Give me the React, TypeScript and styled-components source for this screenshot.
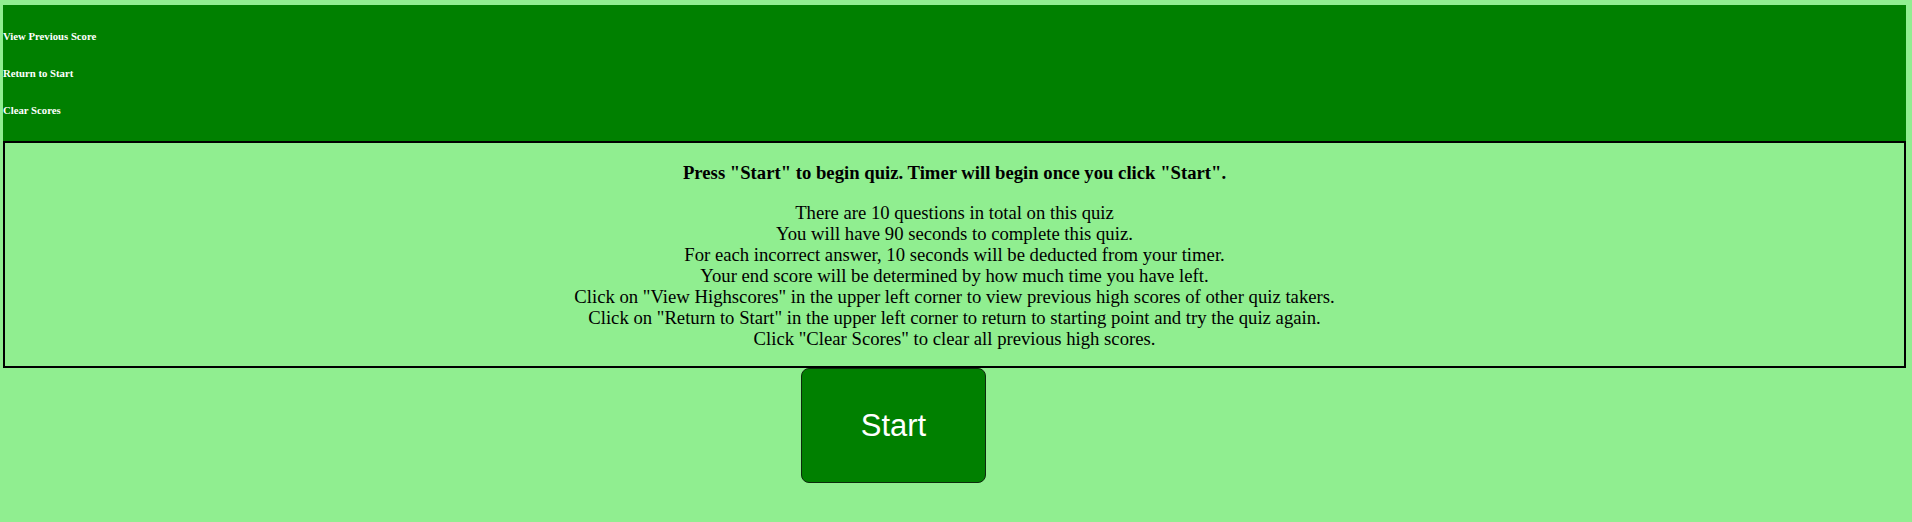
import React from "react";
import styled, { createGlobalStyle } from "styled-components";

const GlobalStyle = createGlobalStyle`
    body {
        margin: 5px 6px 0 3px;
        background-color: #90ee90;
        font-family: "Liberation Serif", "Times New Roman", serif;
    }
`;

const Header = styled.header`
    background-color: #008000;
    display: flex;
    flex-direction: column;
    gap: 25px;
    padding: 25px 0;
`;

const NavLink = styled.a`
    display: block;
    color: white;
    font-size: 10.72px;
    font-weight: bold;
    line-height: 12px;
    text-decoration: none;
    cursor: pointer;
`;

const InfoBox = styled.section`
    border: 2px solid black;
    text-align: center;
    padding: 19px 0 17px;
`;

const Heading = styled.h4`
    margin: 0 0 19px;
    font-size: 18.7px;
    line-height: 21px;
    font-weight: bold;
`;

const Rules = styled.p`
    margin: 0;
    font-size: 18.7px;
    line-height: 21px;
`;

const StartButton = styled.button`
    display: block;
    margin-left: 798px;
    width: 185px;
    height: 115px;
    background-color: #008000;
    border: 1px solid #0d2a0d;
    border-radius: 8px;
    color: white;
    font-family: "Liberation Sans", Arial, sans-serif;
    font-size: 31px;
    cursor: pointer;
`;

const rules = [
    "There are 10 questions in total on this quiz",
    "You will have 90 seconds to complete this quiz.",
    "For each incorrect answer, 10 seconds will be deducted from your timer.",
    "Your end score will be determined by how much time you have left.",
    'Click on "View Highscores" in the upper left corner to view previous high scores of other quiz takers.',
    'Click on "Return to Start" in the upper left corner to return to starting point and try the quiz again.',
    'Click "Clear Scores" to clear all previous high scores.',
];

function App() {
    return (
        <>
            <GlobalStyle />
            <Header>
                <NavLink>View Previous Score</NavLink>
                <NavLink>Return to Start</NavLink>
                <NavLink>Clear Scores</NavLink>
            </Header>
            <InfoBox>
                <Heading>Press "Start" to begin quiz. Timer will begin once you click "Start".</Heading>
                <Rules>
                    {rules.map((line, i) => (
                        <React.Fragment key={i}>
                            {line}
                            {i < rules.length - 1 && <br />}
                        </React.Fragment>
                    ))}
                </Rules>
            </InfoBox>
            <StartButton>Start</StartButton>
        </>
    );
}

export default App;
